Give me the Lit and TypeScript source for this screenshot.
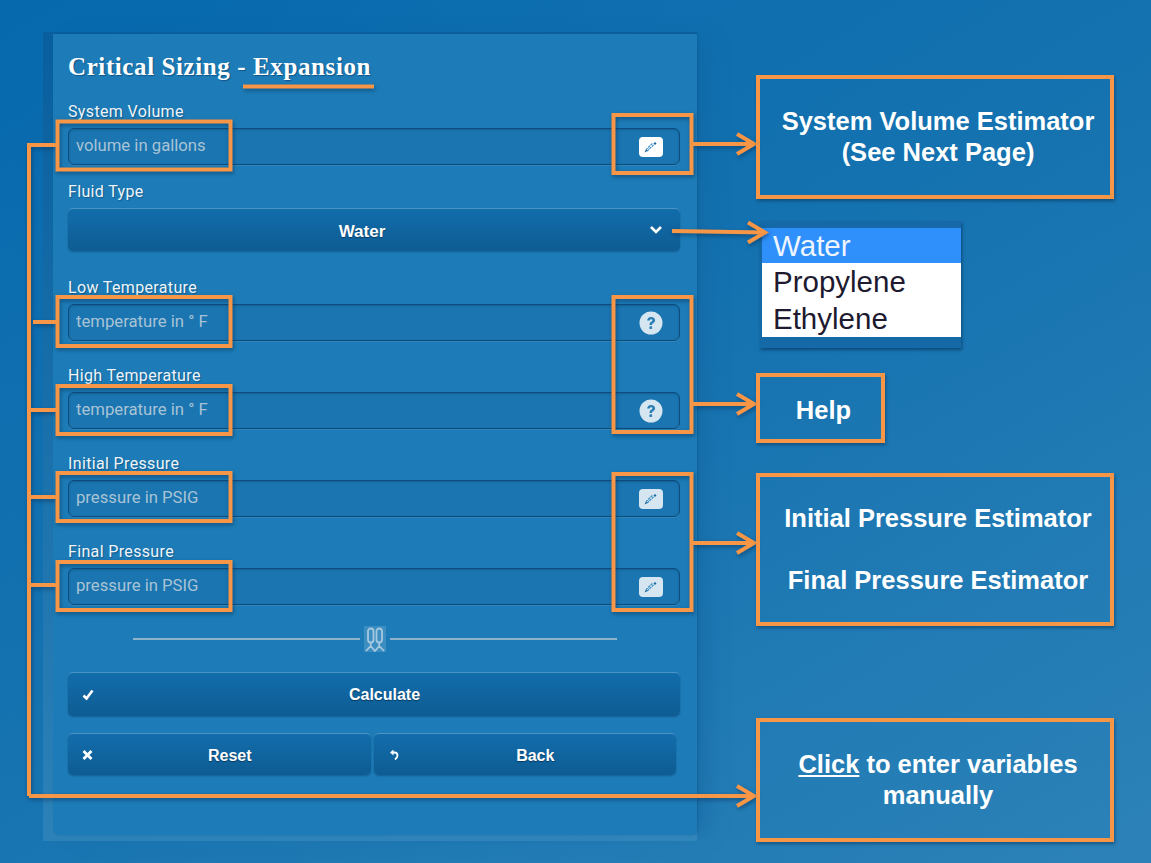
import { LitElement, html, css, svg } from "lit";
import { customElement } from "lit/decorators.js";

const OR = "#f79646";
const pencil = html`<svg viewBox="0 0 24 20" width="24" height="20" aria-hidden="true"><rect width="24" height="20" rx="4" fill="#fff"/><path d="M7.500 13.500l7-7" stroke="#4a97c9" stroke-width="3" stroke-dasharray="2.500 .8"/><path d="M8 13l6-6" stroke="#d8e9f4" stroke-width="1"/><path d="M14.500 6.500l1.500-1.500 1.500 1.500-1.500 1.500z" fill="#17649c"/><path d="M5.500 15.500l1.500-3 1.500 1.500z" fill="#1d5f90"/></svg>`;
const help = html`<svg viewBox="0 0 24 24" width="24" height="24" aria-hidden="true"><circle cx="12" cy="12" r="11.500" fill="#fff"/><path d="M8.200 9.400C8.400 7.200 10 6 12.200 6c2.300 0 3.900 1.300 3.900 3.200 0 1.500-.9 2.300-2 3-.8.500-1 .9-1 1.800h-2.600c0-1.700.5-2.500 1.700-3.300.8-.5 1.200-.9 1.200-1.400 0-.6-.5-1-1.200-1-.8 0-1.300.5-1.400 1.300z" fill="#2f7fb3"/><rect x="10.500" y="15.300" width="2.600" height="2.600" fill="#2f7fb3"/></svg>`;

const boxes: [number, number, number, number][] = [
  [57.5, 121.5, 173, 48], [613.5, 115, 78, 58],
  [57.5, 297, 173, 49], [613.5, 297, 78, 135], [57.5, 386, 173, 48],
  [57.5, 473, 173, 48], [613.5, 474, 78, 136], [57.5, 562, 173, 48],
];
const arrows: [number, number, number, number][] = [
  [693, 144, 755, 144], [672, 231, 766, 232.5], [693, 404, 755, 404], [693, 543, 755, 543], [29, 796, 755, 796],
];
const callouts = [
  { x: 756, y: 75, w: 358, h: 124, cls: "", lines: [html`System Volume Estimator`, html`(See Next Page)`] },
  { x: 756, y: 373, w: 129, h: 70, cls: "low", lines: [html`Help`] },
  { x: 756, y: 473, w: 358, h: 153, cls: "", lines: [html`Initial Pressure Estimator`, html`&nbsp;`, html`Final Pressure Estimator`] },
  { x: 756, y: 718, w: 358, h: 124, cls: "", lines: [html`<u>Click</u> to enter variables`, html`manually`] },
];

@customElement("app-root")
export class AppRoot extends LitElement {
  static styles = css`
    :host { display: block; position: relative; width: 1151px; height: 863px; overflow: hidden;
      background: linear-gradient(150deg, #0669ae 0%, #1673b0 50%, #2c82b8 100%);
      font-family: "Liberation Sans", Arial, sans-serif; }
    .halo { width: 654px; position: absolute; left: 43px; top: 32px; height: 809px; box-sizing: border-box;
      padding: 2px 0 6px 10px; background: linear-gradient(180deg, rgba(10,88,146,.6), rgba(60,140,190,.55));
      box-shadow: 20px 0 18px -10px rgba(20,100,160,.5); }
    .panel { box-sizing: border-box; height: 801px; width: 644px; background: #1d7cb7; border-radius: 0 0 6px 6px;
      padding: 0 17px 0 15px; display: flex; flex-direction: column; box-shadow: 1px 0 2px rgba(10,70,120,.3); }
    h1 { margin: 18px 0 0; height: 30px; font: bold 25px/30px "Liberation Serif", serif; color: #fff; letter-spacing: .6px;
      text-shadow: 1px 1px 1px rgba(0,40,80,.45); }
    .fields { display: flex; flex-direction: column; margin-top: 21px; }
    .field { display: flex; flex-direction: column; }
    .gap-s { margin-top: 18px; } .gap-l { margin-top: 28px; } .gap-m { margin-top: 26px; }
    label { height: 18px; margin-bottom: 7px; font: 400 16px/18px Roboto, sans-serif; letter-spacing: .35px; color: #eef5fa;
      text-shadow: 1px 1px 1px rgba(0,40,80,.4); }
    .input { box-sizing: border-box; height: 37px; display: flex; align-items: center; justify-content: space-between;
      padding: 0 16px 0 7px; background: #1a75b1; border: 1px solid #0f4c7b; border-radius: 6px;
      box-shadow: inset 0 1px 2px rgba(0,40,80,.25), 0 1px 0 rgba(255,255,255,.08);
      font: 16.700px/20px Roboto, sans-serif; color: #a9c3d5; }
    .input span { margin-top: -2px; }
    .input svg { display: block; }
    .muted svg { opacity: .82; }
    .btn { box-sizing: border-box; display: flex; align-items: center; justify-content: center; position: relative;
      padding: 1px 0 0 21px;
      color: #fff; font: bold 16px/20px "Liberation Sans", sans-serif; border-radius: 5px;
      background: linear-gradient(180deg, #126dab, #0e5c93); border-top: 1px solid #4a94c6;
      box-shadow: 0 1px 2px rgba(0,40,80,.35); text-shadow: 0 1px 1px rgba(0,30,60,.6); }
    .btn.select { height: 43px; padding: 3px 24px 0 0; font-size: 17px; }
    .chev { position: absolute; right: 17px; top: 16px; }
    .divider { display: flex; align-items: center; justify-content: center; gap: 4px; margin: 21px 0 0 2px; height: 26px; }
    .rule { width: 227px; height: 2px; background: #8fb3cb; }
    .calc { height: 44px; margin-top: 20px; }
    .row { display: flex; gap: 3px; margin-top: 17px; width: 608px; }
    .row .btn { height: 42px; flex: 1; padding-top: 3px; }
    .ico { position: absolute; left: 14px; top: 50%; transform: translateY(-50%); display: block; }
    .ico.back { left: 16px; }
    .overlay { position: absolute; inset: 0; width: 100%; height: 100%; pointer-events: none;
      filter: drop-shadow(1px 2px 2px rgba(5,45,85,.55)); }
    .callout { position: absolute; box-sizing: border-box; border: 4px solid #f79646;
      display: flex; flex-direction: column; align-items: center; justify-content: center; padding-left: 6px;
      color: #fff; font: bold 25.500px/31px "Liberation Sans", sans-serif; box-shadow: 1px 2px 3px rgba(5,45,85,.5); }
    .callout.low { padding-top: 4px; }
    .callout div { white-space: nowrap; }
    .list { position: absolute; left: 760px; top: 221px; width: 201px; height: 127px; box-sizing: border-box;
      padding: 7px 0 11px 2px; background: #1569a6; box-shadow: 1px 2px 3px rgba(5,45,85,.6);
      font: 29.500px/37px "Liberation Sans", sans-serif; color: #201a30; }
    .opt { height: 37px; padding-left: 11px; background: #fff; white-space: nowrap; }
    .opt.sel { background: #2f90fb; color: #eef5ff; height: 35px; line-height: 36px; }
  `;

  private field(label: string, ph: string, gap: string, icon?: unknown, muted = false) {
    return html`<div class="field ${gap}"><label>${label}</label>
      <div class="input ${muted ? "muted" : ""}"><span>${ph}</span>${icon ?? ""}</div></div>`;
  }

  render() {
    return html`
      <div class="halo"><section class="panel">
        <h1>Critical Sizing - Expansion</h1>
        <div class="fields">
          ${this.field("System Volume", "volume in gallons", "", pencil)}
          <div class="field gap-s"><label>Fluid Type</label>
            <div class="btn select">Water
              <svg class="chev" width="14" height="10" viewBox="0 0 14 10" aria-hidden="true"><path d="M2 2l5 5 5-5" fill="none" stroke="#fff" stroke-width="2.600"/></svg>
            </div></div>
          ${this.field("Low Temperature", "temperature in ° F", "gap-l", help, true)}
          ${this.field("High Temperature", "temperature in ° F", "gap-m", help, true)}
          ${this.field("Initial Pressure", "pressure in PSIG", "gap-m", pencil, true)}
          ${this.field("Final Pressure", "pressure in PSIG", "gap-m", pencil, true)}
        </div>
        <div class="divider"><i class="rule"></i>
          <svg width="22" height="26" viewBox="0 0 22 26" aria-hidden="true"><rect width="22" height="26" fill="#5d9fc9" opacity=".5"/><g fill="none" stroke="#a3c8df" stroke-width="1.800"><rect x="4" y="2.500" width="5.500" height="14" rx="2.700"/><rect x="12.500" y="2.500" width="5.500" height="14" rx="2.700"/><path d="M6.700 16.500v3M15.200 16.500v3M2 25l4.700-5 4.300 5 4.200-5 4.800 5"/></g></svg>
          <i class="rule"></i></div>
        <div class="btn calc">
          <svg class="ico" width="12" height="11" viewBox="0 0 12 11" aria-hidden="true"><path d="M1.500 6l3 3 6-8" fill="none" stroke="#fff" stroke-width="2.600"/></svg>
          <span>Calculate</span></div>
        <div class="row">
          <div class="btn"><svg class="ico" width="11" height="11" viewBox="0 0 11 11" aria-hidden="true"><path d="M1.500 1.500l8 8M9.500 1.500l-8 8" stroke="#fff" stroke-width="2.800"/></svg>Reset</div>
          <div class="btn"><svg class="ico back" width="9" height="11" viewBox="0 0 9 11" aria-hidden="true"><path d="M3 3h1.500a3 3 0 0 1 3 3c0 1.500-1 2.800-2.500 4" fill="none" stroke="#fff" stroke-width="1.800"/><path d="M0 3l3.500-3v6z" fill="#fff"/></svg>Back</div>
        </div>
      </section></div>

      <div class="list"><div class="opt sel">Water</div><div class="opt">Propylene</div><div class="opt">Ethylene</div></div>

      <svg class="overlay" viewBox="0 0 1151 863" aria-hidden="true">
        <g fill="none" stroke="${OR}" stroke-width="4">
          <path d="M243 86.500h131"/>
          ${boxes.map(([x, y, w, h]) => svg`<rect x="${x}" y="${y}" width="${w}" height="${h}"/>`)}
          <path d="M56 145H29V796M56 322H33M56 410H29M56 497H29M56 585H29"/>
          ${arrows.map(([a, b, c, d]) => svg`<path d="M${a} ${b}L${c} ${d}M${c - 18} ${d - 10}L${c - 1} ${d}L${c - 18} ${d + 10}"/>`)}
        </g>
      </svg>

      ${callouts.map(c => html`<div class="callout ${c.cls}" style="left:${c.x}px;top:${c.y}px;width:${c.w}px;height:${c.h}px">
        ${c.lines.map(l => html`<div>${l}</div>`)}</div>`)}
    `;
  }
}
